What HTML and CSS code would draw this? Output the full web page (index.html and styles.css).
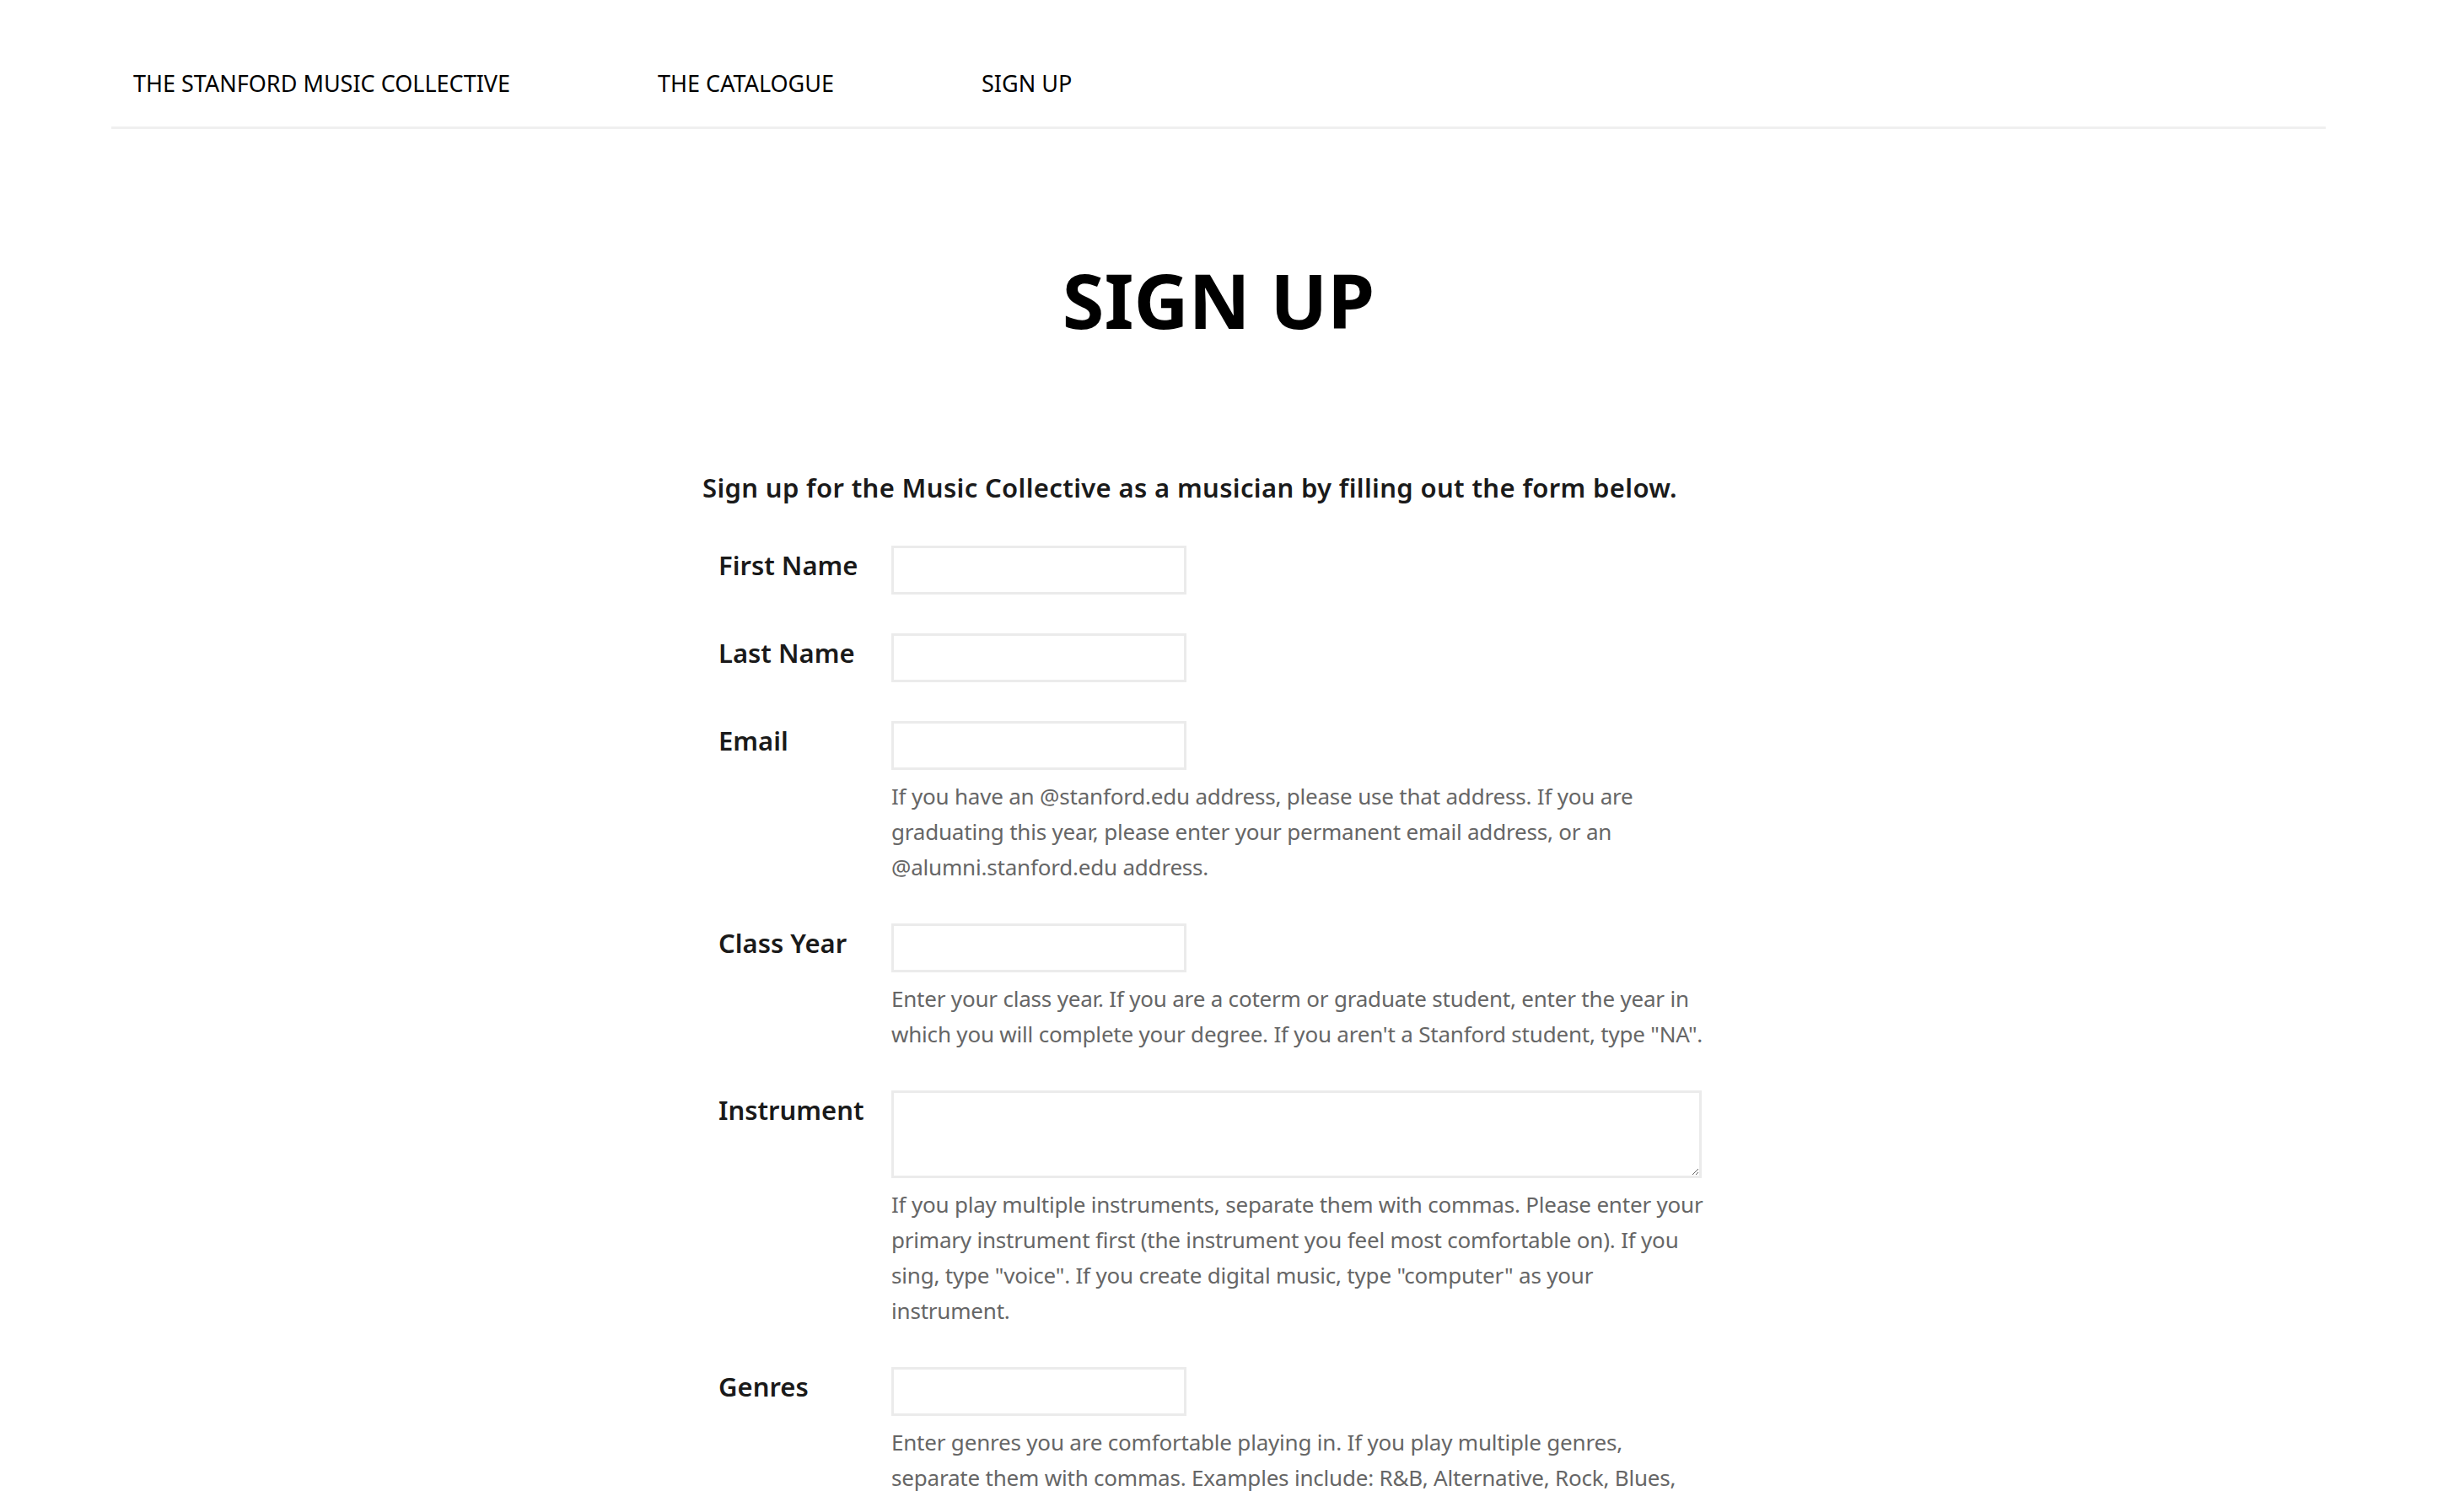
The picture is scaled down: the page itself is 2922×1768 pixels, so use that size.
FILE: index.html
```html
<!DOCTYPE html>
<html lang="en">
<head>
<meta charset="utf-8">
<title>Sign Up - The Stanford Music Collective</title>
<link rel="stylesheet" href="styles.css">
</head>
<body>
<div class="page">
  <nav class="nav">
    <a class="nav-link" href="#">THE STANFORD MUSIC COLLECTIVE</a>
    <a class="nav-link" href="#">THE CATALOGUE</a>
    <a class="nav-link" href="#">SIGN UP</a>
  </nav>
  <h1 class="title">SIGN UP</h1>
  <form class="form">
    <p class="intro">Sign up for the Music Collective as a musician by filling out the form below.</p>
    <div class="row">
      <label class="label">First Name</label>
      <div class="field"><input class="input" type="text"></div>
    </div>
    <div class="row">
      <label class="label">Last Name</label>
      <div class="field"><input class="input" type="text"></div>
    </div>
    <div class="row">
      <label class="label">Email</label>
      <div class="field">
        <input class="input" type="text">
        <p class="help">If you have an @stanford.edu address, please use that address. If you are graduating this year, please enter your permanent email address, or an @alumni.stanford.edu address.</p>
      </div>
    </div>
    <div class="row">
      <label class="label">Class Year</label>
      <div class="field">
        <input class="input" type="text">
        <p class="help">Enter your class year. If you are a coterm or graduate student, enter the year in which you will complete your degree. If you aren't a Stanford student, type "NA".</p>
      </div>
    </div>
    <div class="row">
      <label class="label">Instrument</label>
      <div class="field">
        <textarea class="textarea"></textarea>
        <p class="help">If you play multiple instruments, separate them with commas. Please enter your primary instrument first (the instrument you feel most comfortable on). If you sing, type "voice". If you create digital music, type "computer" as your instrument.</p>
      </div>
    </div>
    <div class="row">
      <label class="label">Genres</label>
      <div class="field">
        <input class="input" type="text">
        <p class="help">Enter genres you are comfortable playing in. If you play multiple genres, separate them with commas. Examples include: R&amp;B, Alternative, Rock, Blues, Jazz, Classical, Hip-Hop.</p>
      </div>
    </div>
  </form>
</div>
</body>
</html>
```
FILE: styles.css
```css
html, body {
  margin: 0;
  padding: 0;
  background: #fff;
}
body {
  font-family: "Noto Sans", "Open Sans", sans-serif;
  color: #111;
}
.page {
  margin: 0 164px 0 132px;
}
.nav {
  display: flex;
  gap: 175px;
  padding: 80px 26px 33px;
  border-bottom: 3px solid #f0f0f0;
}
.nav-link {
  font-size: 27px;
  color: #000;
  text-decoration: none;
  line-height: normal;
}
.title {
  margin: 157px 0 0;
  text-align: center;
  font-size: 90px;
  line-height: 1;
  font-weight: 700;
  color: #000;
}
.form {
  width: 1224px;
  margin: 0 auto;
}
.intro {
  margin: 157px 0 48px;
  font-size: 31px;
  letter-spacing: 0.35px;
  font-weight: 600;
  color: #1a1a1a;
}
.row {
  display: grid;
  grid-template-columns: 205px 1fr;
  padding-left: 19px;
  margin-bottom: 46px;
}
.label {
  padding-top: 2px;
  font-size: 31px;
  font-weight: 600;
  color: #1a1a1a;
}
.field {
  min-width: 0;
}
.input {
  display: block;
  box-sizing: border-box;
  width: 350px;
  height: 58px;
  border: 3px solid #ebebeb;
  border-radius: 0;
  background: #fff;
  margin: 0;
  padding: 0 10px;
  font: inherit;
}
.textarea {
  display: block;
  box-sizing: border-box;
  width: 961px;
  height: 104px;
  border: 3px solid #ebebeb;
  border-radius: 0;
  background: #fff;
  margin: 0;
  padding: 10px;
  font: inherit;
}
.help {
  max-width: 975px;
  margin: 10px 0 0;
  font-size: 26px;
  letter-spacing: -0.2px;
  line-height: 42px;
  color: #666;
}
```
